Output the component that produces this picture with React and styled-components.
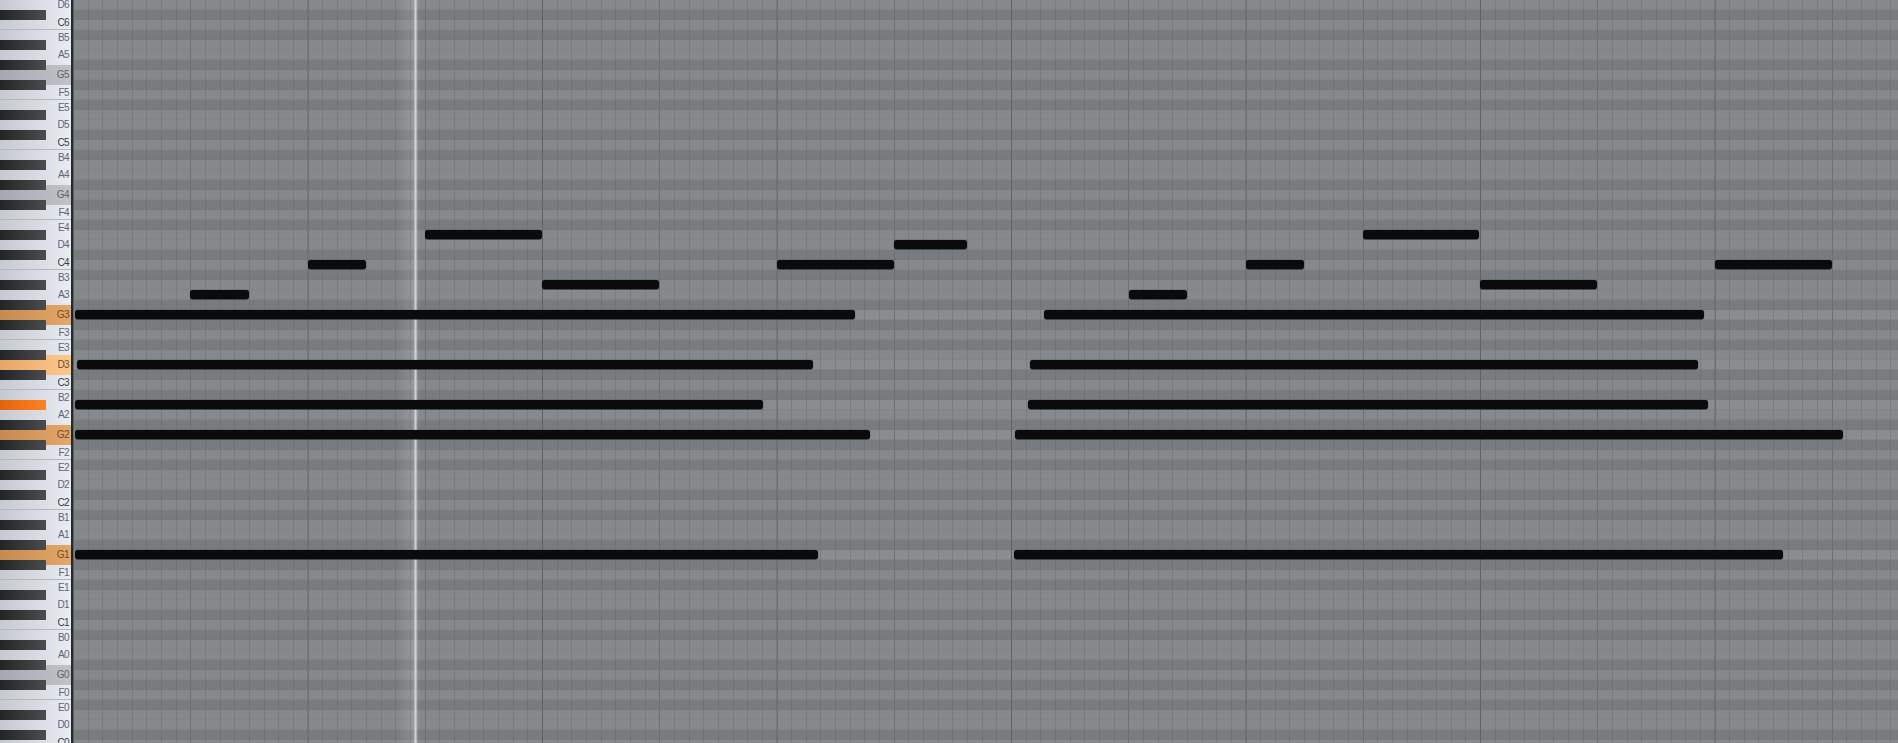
import React from 'react';
import styled, { createGlobalStyle, css } from 'styled-components';

const ROW_COUNT = 75;
const ROW_HEIGHT = 10;
const TOP_PITCH = 74; // D6
const NAMES = ['C', 'C#', 'D', 'D#', 'E', 'F', 'F#', 'G', 'G#', 'A', 'A#', 'B'];
const DARK_ROWS = [1, 3, 6, 8, 10];
const LIT_ROWS = [31, 36, 40, 43, 55];
const GRID_LEFT = 73;

// white key labels sit in the middle of the key, not of the row
const LABEL_PADDING = {
  C: '0 2px 4px 0',
  F: '0 2px 4px 0',
  B: '6px 2px 0 0',
  E: '6px 2px 0 0',
};

const KEY_STATES = {
  7: 'grey',
  19: 'grey',
  31: 'amber',
  36: 'peach',
  40: 'hot',
  43: 'amber',
  55: 'amber',
  67: 'grey',
};

const NOTES = {
  23: [[425, 542], [1363, 1479]],
  24: [[894, 967]],
  26: [[308, 366], [777, 894], [1246, 1304], [1715, 1832]],
  28: [[542, 659], [1480, 1597]],
  29: [[190, 249], [1129, 1187]],
  31: [[75, 855], [1044, 1704]],
  36: [[77, 813], [1030, 1698]],
  40: [[75, 763], [1028, 1708]],
  43: [[75, 870], [1015, 1843]],
  55: [[75, 818], [1014, 1783]],
};

const GlobalStyle = createGlobalStyle`
  html, body {
    margin: 0;
    height: 100%;
    overflow: hidden;
    background: #85898c;
  }
`;

const Roll = styled.div`
  display: flex;
  width: 100%;
  height: 743px;
  overflow: hidden;
`;

const Keyboard = styled.div`
  flex: 0 0 71px;
  display: flex;
  flex-direction: column;
  border-right: 2px solid #26282b;
  background: #dfe2e8;
`;

const keyFills = {
  white: css`
    background: linear-gradient(90deg, #c5c9d0, #e9ecf1);
  `,
  grey: css`
    background: linear-gradient(90deg, #a5a9af, #c0c4c9);
  `,
  amber: css`
    background: linear-gradient(90deg, #c48a52, #e6a868);
  `,
  peach: css`
    background: linear-gradient(90deg, #e6a468, #ffc98c);
  `,
};

const Key = styled.div`
  position: relative;
  flex: 0 0 ${ROW_HEIGHT}px;
  min-height: 0;
  box-sizing: border-box;
  display: flex;
  align-items: center;
  justify-content: flex-end;
  padding: ${({ $padding }) => $padding || '0 2px 0 0'};
  ${keyFills.white};
  ${({ $boundary }) => $boundary && 'box-shadow: inset 0 -1px 0 #b3b7bf;'}
`;

const KeyGlow = styled.div`
  position: absolute;
  inset: -5px 0;
  z-index: 1;
  ${({ $state }) => keyFills[$state]};
`;

const BlackKey = styled.div`
  position: absolute;
  inset: 0 25px 0 0;
  z-index: 2;
  background: ${({ $hot }) =>
    $hot
      ? 'linear-gradient(90deg, #e0640c, #ff8222)'
      : 'linear-gradient(90deg, #232425, #4b4c4e)'};
`;

const KeyLabel = styled.span`
  position: relative;
  z-index: 3;
  font: 400 10px/10px 'Liberation Sans', Arial, sans-serif;
  letter-spacing: -0.6px;
  white-space: nowrap;
  color: ${({ $root, $state }) => {
    if ($state === 'amber' || $state === 'peach') return '#6e4c2c';
    if ($state === 'grey') return '#5c6269';
    return $root ? '#333d4e' : '#5a667b';
  }};
`;

const Grid = styled.div`
  position: relative;
  flex: 1;
  display: flex;
  flex-direction: column;
`;

const Lane = styled.div`
  flex: 0 0 ${ROW_HEIGHT}px;
  box-sizing: border-box;
  background: ${({ $dark, $lit }) => {
    if ($dark) return '#787c7f';
    return $lit ? '#898d90' : '#85898c';
  }};
  border-bottom: 1px solid ${({ $dark }) => ($dark ? '#76797c' : '#818588')};
`;

const Note = styled.div`
  position: absolute;
  z-index: 3;
  height: 9px;
  border-radius: 3px;
  background: #0b0b0b;
  box-shadow: 0 0 1px rgba(10, 10, 10, 0.8), 0 1px 0 rgba(10, 10, 10, 0.45);
`;

const Rulings = styled.div`
  position: absolute;
  inset: 0;
  z-index: 1;
  pointer-events: none;
  background-image:
    repeating-linear-gradient(90deg, #5f6366 0 1px, transparent 1px 469px),
    repeating-linear-gradient(90deg, #6c7073 0 1px, transparent 1px 117.25px),
    repeating-linear-gradient(90deg, rgba(94, 98, 101, 0.34) 0 1px, transparent 1px 14.656px);
`;

const Playhead = styled.div`
  position: absolute;
  inset: 0 auto 0 324px;
  z-index: 2;
  width: 23px;
  pointer-events: none;
  background: linear-gradient(
    90deg,
    rgba(255, 255, 255, 0) 0,
    rgba(255, 255, 255, 0.12) 15px,
    rgba(255, 255, 255, 0.2) 17px,
    rgba(222, 224, 226, 0.85) 18px,
    rgba(222, 224, 226, 0.85) 19px,
    rgba(255, 255, 255, 0.2) 20px,
    rgba(255, 255, 255, 0.05) 21px,
    rgba(255, 255, 255, 0) 23px
  );
`;

const rows = Array.from({ length: ROW_COUNT }, (_, row) => {
  const pitch = TOP_PITCH - row;
  const pitchClass = pitch % 12;
  const name = NAMES[pitchClass];
  return {
    row,
    label: `${name}${Math.floor(pitch / 12)}`,
    black: name.includes('#'),
    root: pitchClass === 0,
    boundary: pitchClass === 0 || pitchClass === 5,
    padding: LABEL_PADDING[name],
    state: KEY_STATES[row],
  };
});

const App = () => (
  <>
    <GlobalStyle />
    <Roll>
      <Keyboard>
        {rows.map(({ row, label, black, root, boundary, padding, state }) => (
          <Key key={row} $boundary={boundary} $padding={padding}>
            {state && state !== 'hot' && <KeyGlow $state={state} />}
            {black && <BlackKey $hot={state === 'hot'} />}
            {!black && (
              <KeyLabel $root={root} $state={state}>
                {label}
              </KeyLabel>
            )}
          </Key>
        ))}
      </Keyboard>
      <Grid>
        {rows.map(({ row }) => (
          <Lane key={row} $dark={DARK_ROWS.includes(row % 12)} $lit={LIT_ROWS.includes(row)}>
            {(NOTES[row] || []).map(([from, to]) => (
              <Note key={from} style={{ left: from - GRID_LEFT, width: to - from }} />
            ))}
          </Lane>
        ))}
        <Rulings />
        <Playhead />
      </Grid>
    </Roll>
  </>
);

export default App;
